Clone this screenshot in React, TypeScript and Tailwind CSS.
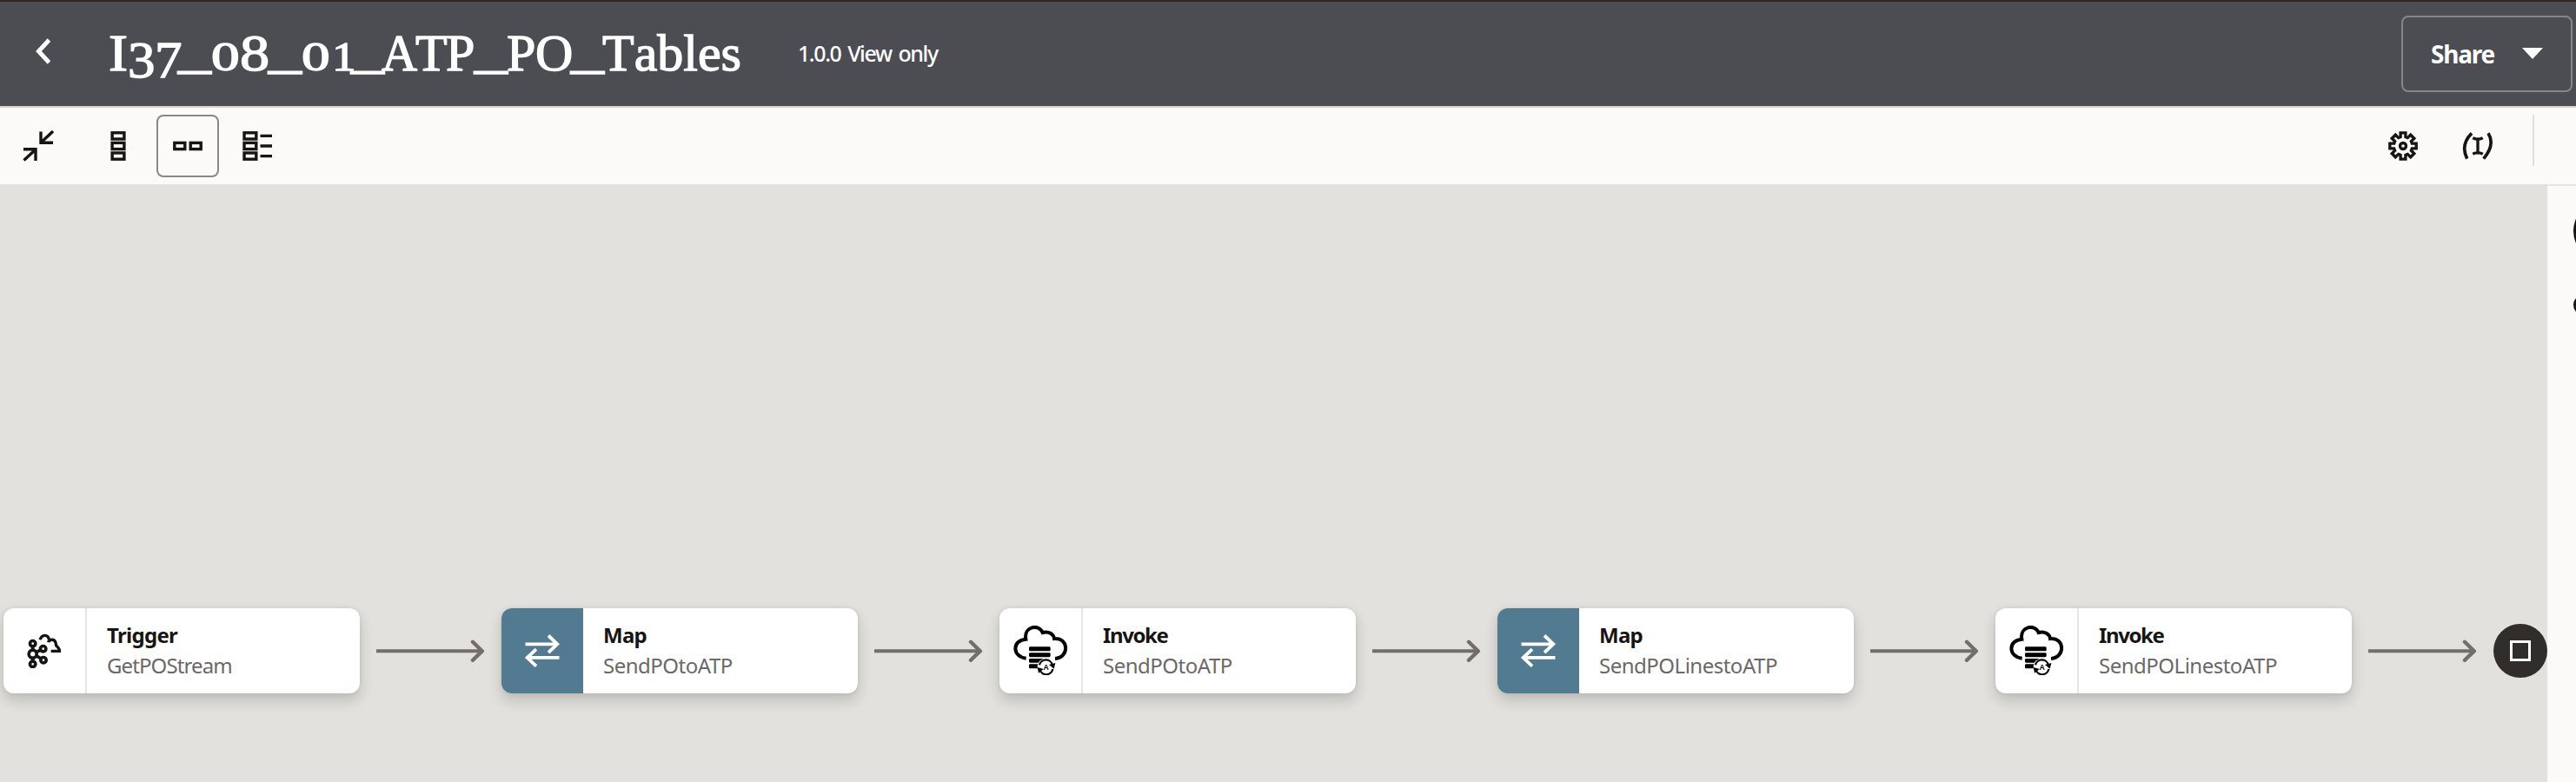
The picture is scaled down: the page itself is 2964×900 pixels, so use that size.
const SANS = "font-['Noto_Sans','Open_Sans',sans-serif]";

type Glyph = { ch: string; cell: string; shape?: string };

// Old-style figures: 0 and 1 sit at x-height, 3 and 7 hang below the baseline.
const TITLE: Glyph[] = [
  { ch: 'I', cell: 'w-[22px]', shape: 'scale-x-[1.1]' },
  { ch: '3', cell: 'w-[31px]', shape: 'translate-y-[8px] scale-x-[1.05]' },
  { ch: '7', cell: 'w-[27px]', shape: 'translate-y-[8px] scale-x-[1.05]' },
  { ch: '_', cell: 'w-[38px]', shape: '-translate-y-1 scale-x-[1.26]' },
  { ch: '0', cell: 'w-[33px]', shape: 'text-[46px] scale-x-[1.42]' },
  { ch: '8', cell: 'w-[33px]', shape: 'scale-x-[1.14]' },
  { ch: '_', cell: 'w-[38px]', shape: '-translate-y-1 scale-x-[1.26]' },
  { ch: '0', cell: 'w-[35px]', shape: 'text-[46px] scale-x-[1.42]' },
  { ch: '1', cell: 'w-[22px]', shape: 'text-[46px] scale-x-[1.2]' },
  { ch: '_', cell: 'w-[35px]', shape: '-translate-y-1 scale-x-[1.26]' },
  { ch: 'A', cell: 'w-[39px]', shape: 'scale-x-[0.95]' },
  { ch: 'T', cell: 'w-[35px]' },
  { ch: 'P', cell: 'w-[33px]' },
  { ch: '_', cell: 'w-[37px]', shape: '-translate-y-1 scale-x-[1.26]' },
  { ch: 'P', cell: 'w-[33px]' },
  { ch: 'O', cell: 'w-[41px]' },
  { ch: '_', cell: 'w-[36px]', shape: '-translate-y-1 scale-x-[1.26]' },
];

function Title() {
  return (
    <h1 className="mt-[2px] ml-[67px] flex items-baseline whitespace-nowrap font-['Liberation_Serif',serif] text-[60px] leading-[68px] text-white [-webkit-text-stroke:1.3px_white] [font-kerning:none]">
      {TITLE.map((g, i) => (
        <span key={i} className={g.cell}>
          <span className={'inline-block origin-left ' + (g.shape ?? '')}>{g.ch}</span>
        </span>
      ))}
      <span>Tables</span>
    </h1>
  );
}

function CollapseIcon() {
  return (
    <svg width="36" height="36" viewBox="0 0 36 36" fill="none" stroke="#161513" strokeWidth="3.4">
      <path d="M21 1.5V14.3H35M35 1L21.5 13.8M1 21.7H15V35M15 22L1.5 34.6" />
    </svg>
  );
}

function VerticalIcon() {
  return (
    <svg width="18" height="34" viewBox="0 0 18 34" fill="none" stroke="#161513" strokeWidth="3.4">
      <rect x="2.1" y="1.8" width="13.8" height="7.2" />
      <rect x="2.1" y="13.4" width="13.8" height="7.2" />
      <rect x="2.1" y="25" width="13.8" height="7.2" />
    </svg>
  );
}

function HorizontalIcon() {
  return (
    <svg width="34" height="12" viewBox="0 0 34 12" fill="none" stroke="#161513" strokeWidth="3.4">
      <rect x="1.8" y="2.4" width="12" height="7.2" />
      <rect x="20.2" y="2.4" width="12" height="7.2" />
    </svg>
  );
}

function OutlineIcon() {
  return (
    <svg width="35" height="34" viewBox="0 0 35 34" fill="none" stroke="#161513" strokeWidth="3.4">
      <rect x="2" y="1.8" width="13.8" height="7.2" />
      <rect x="2" y="13.4" width="13.8" height="7.2" />
      <rect x="2" y="25" width="13.8" height="7.2" />
      <path d="M20.5 5.4H34M20.5 17H34M20.5 28.6H34" />
    </svg>
  );
}

function GearIcon() {
  const pts: string[] = [];
  for (let i = 0; i < 8; i++) {
    const a = (i * Math.PI) / 4;
    const corners = [
      [-8.7, 31],
      [-8.7, 45.6],
      [8.7, 45.6],
      [8.7, 31],
    ];
    for (const [t, r] of corners) {
      const x = t * Math.cos(a) + r * Math.sin(a);
      const y = t * Math.sin(a) - r * Math.cos(a);
      pts.push(x.toFixed(2) + ',' + y.toFixed(2));
    }
  }
  return (
    <svg width="34" height="34" viewBox="-51 -51 102 102" fill="none" stroke="#161513" strokeWidth="10">
      <polygon points={pts.join(' ')} />
      <circle r="10.5" />
    </svg>
  );
}

function VariableIcon() {
  return (
    <svg width="36" height="32" viewBox="341 36 108 96" fill="none" stroke="#161513" strokeWidth="11">
      <path d="M374 40Q334 80 358 128M431 40Q456 80 415 128" />
      <path d="M395 60V108M378 56Q385 61 395 60Q405 61 412 56M378 112Q385 107 395 108Q405 107 412 112" strokeWidth="10" />
    </svg>
  );
}

function StreamIcon() {
  return (
    <svg width="40" height="40" viewBox="94 100 120 120" fill="none" stroke="#161513" strokeWidth="11">
      <circle cx="114" cy="135" r="9.5" />
      <circle cx="114" cy="206" r="9.5" />
      <circle cx="114" cy="171" r="13.5" />
      <circle cx="150" cy="153" r="9.5" />
      <circle cx="151" cy="192" r="9.5" />
      <path d="M114 144V158M114 184V197M126 165L142 157M126 177L143 187" />
      <path d="M139 122C146 101 167 104 170 120M168 131C170 119 190 118 193 132L195 142C201 148 207 152 206.5 161H177" strokeWidth="10" />
    </svg>
  );
}

function MapIcon() {
  return (
    <svg width="40" height="38" viewBox="0 0 40 38" fill="none" stroke="#fff" strokeWidth="3.8">
      <path d="M.5 11.3H37M27 1.5L37.3 11.3L27 21M39.5 26.9H3M13 17.2L2.7 26.9L13 36.7" />
    </svg>
  );
}

function CloudDbIcon() {
  return (
    <svg className="mb-px" width="62" height="57" viewBox="63 74 186 171" fill="none" stroke="#000" strokeWidth="12">
      <path d="M107 187C58 182 58 124 106 121C98 76 151 67 164 98C184 92 202 103 204 119C255 115 257 184 207 188" />
      <g fill="#000" stroke="none">
        <rect x="117" y="147" width="74" height="15" rx="4" />
        <rect x="117" y="167.5" width="74" height="15" rx="4" />
        <rect x="117" y="188" width="50" height="14" rx="4" />
        <rect x="117" y="207" width="40" height="15" rx="4" />
        <circle cx="176" cy="217" r="30" fill="#fff" />
        <path d="M186 209L208 203L203 223ZM167 224L146 218L150 238Z" />
        <text x="176" y="226" textAnchor="middle" fontSize="26" fontWeight="700" fontFamily="Liberation Sans, sans-serif">
          A
        </text>
      </g>
      <path d="M153 210A23 23 0 0 1 198 211M199 224A23 23 0 0 1 154 225" strokeWidth="6.5" />
    </svg>
  );
}

function Arrow() {
  return (
    <svg className="mr-5 ml-[19px] shrink-0" width="124.5" height="26" viewBox="0 0 124.5 26" fill="none" stroke="#736e6a">
      <path d="M0 13.3H122" strokeWidth="4" />
      <path d="M111 2.8L121.7 13.3L111 23.8" strokeWidth="4.4" strokeLinecap="round" />
    </svg>
  );
}

type StepProps = { kind: 'Trigger' | 'Map' | 'Invoke'; name: string };

function Step({ kind, name }: StepProps) {
  return (
    <div className="flex h-[97.5px] w-[409.5px] shrink-0 overflow-hidden rounded-[12px] bg-white shadow-[0_8px_16px_rgba(22,21,19,0.18),0_0_5px_rgba(22,21,19,0.07)]">
      <div
        className={
          kind === 'Map'
            ? 'flex w-[94px] items-center justify-center bg-[#527b91]'
            : 'flex w-[96px] items-center justify-center border-r-2 border-[#e6e5e3]'
        }
      >
        {kind === 'Trigger' && <StreamIcon />}
        {kind === 'Map' && <MapIcon />}
        {kind === 'Invoke' && <CloudDbIcon />}
      </div>
      <div className={'flex flex-col justify-center pb-[2px] pl-[23px] text-[24px] leading-[35px] whitespace-nowrap ' + SANS}>
        <span className={'font-bold text-[#161513] ' + (kind === 'Invoke' ? 'tracking-[-1.4px]' : 'tracking-[-0.7px]')}>{kind}</span>
        <span className={'text-[#6b6966] ' + (kind === 'Trigger' ? 'tracking-[-0.9px]' : 'tracking-[-0.5px]')}>{name}</span>
      </div>
    </div>
  );
}

export default function App() {
  return (
    <div className="flex h-[900px] w-[2964px] flex-col overflow-hidden bg-[#e2e1dd]">
      <header className="flex h-[124px] shrink-0 items-center border-t-2 border-b-2 border-t-[#2b2824] border-b-[#d7d5c7] bg-[#4b4d52] pr-1 pl-[41px]">
        <svg className="-mt-1.5" width="17" height="30" viewBox="0 0 17 30" fill="none" stroke="#fff" strokeWidth="5">
          <path d="M15.5 2L3.5 15L15.5 28" />
        </svg>
        <Title />
        <span className={'ml-[65px] text-[25px] font-medium tracking-[-1.4px] [word-spacing:2.6px] whitespace-nowrap text-white ' + SANS}>
          1.0.0 View only
        </span>
        <button className="ml-auto flex h-[88px] w-[197px] items-center rounded-[8px] border-2 border-[#85868a] pl-8">
          <span className={'w-[73px] text-[28px] font-bold tracking-[-1.2px] text-white ' + SANS}>Share</span>
          <svg className="ml-[31px]" width="26" height="14" viewBox="0 0 26 14" fill="#fff">
            <path d="M1 0H25L13 13Z" />
          </svg>
        </button>
      </header>
      <div className="flex h-[88px] shrink-0 items-center bg-[#fbfaf8] pl-[26px]">
        <CollapseIcon />
        <div className="ml-[65px]">
          <VerticalIcon />
        </div>
        <div className="ml-[35px] flex h-[72px] w-[72px] items-center justify-center rounded-[8px] border-2 border-[#8a8885]">
          <HorizontalIcon />
        </div>
        <div className="ml-[27px]">
          <OutlineIcon />
        </div>
        <div className="mr-12 ml-auto flex items-center">
          <GearIcon />
          <div className="ml-[51px]">
            <VariableIcon />
          </div>
          <div className="mb-[13px] ml-[45px] h-[59px] w-0.5 bg-[#e0dfdb]" />
        </div>
      </div>
      <div className="flex grow">
        <main className="w-[2931px] overflow-hidden pt-[488px]">
          <div className="flex items-center pl-1">
            <Step kind="Trigger" name="GetPOStream" />
            <Arrow />
            <Step kind="Map" name="SendPOtoATP" />
            <Arrow />
            <Step kind="Invoke" name="SendPOtoATP" />
            <Arrow />
            <Step kind="Map" name="SendPOLinestoATP" />
            <Arrow />
            <Step kind="Invoke" name="SendPOLinestoATP" />
            <Arrow />
            <div className="flex h-[62px] w-[62px] shrink-0 items-center justify-center rounded-full bg-[#312d2a]">
              <div className="h-6 w-6 border-[3px] border-white" />
            </div>
          </div>
        </main>
        <aside className="w-[33px] shrink-0 overflow-hidden border-t-2 border-[#e6e5e2] bg-[#fbfaf8]">
          <svg width="33" height="160" viewBox="0 0 33 160">
            <circle cx="64" cy="52" r="32" fill="none" stroke="#161513" strokeWidth="4" />
            <circle cx="42" cy="137" r="12" fill="#161513" />
          </svg>
        </aside>
      </div>
    </div>
  );
}
